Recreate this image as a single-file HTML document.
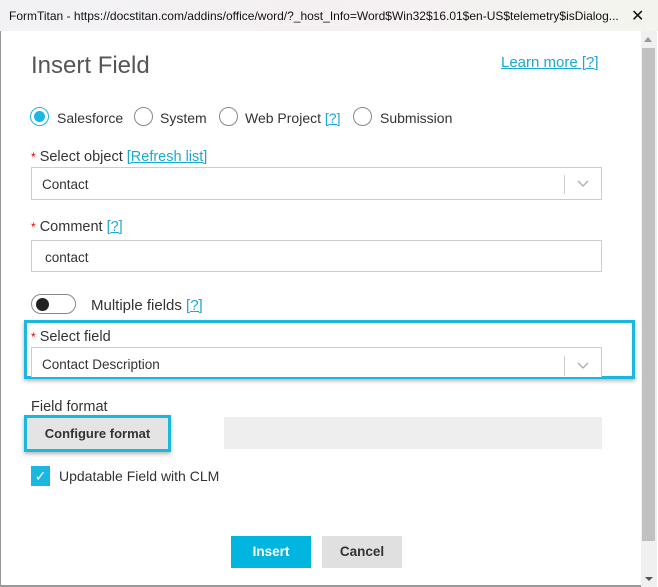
<!DOCTYPE html>
<html><head><style>
*{box-sizing:border-box;margin:0;padding:0}
body{width:658px;height:587px;overflow:hidden;background:#fff;font-family:"Liberation Sans",sans-serif;color:#333;position:relative;font-size:14px}
.a{position:absolute}
.tb{left:0;top:0;width:658px;height:31px;background:linear-gradient(90deg,#f2f2f4,#f5f0f2 60%,#f3f4ee);font-size:12px;color:#111;padding:9px 0 0 9px;white-space:nowrap}
.lbl{font-size:14.5px;color:#333}
.req{color:#d00;font-size:12px}
.lnk{color:#1ba8d0;text-decoration:underline}
.inp{border:1px solid #ccc;background:#fff;font-size:13.5px;padding-left:10px}
.radio{width:19px;height:19px;border:1px solid #888;border-radius:50%}
</style></head><body>
<div class="a tb">FormTitan - https://docstitan.com/addins/office/word/?_host_Info=Word$Win32$16.01$en-US$telemetry$isDialog...<span style="position:absolute;left:631px;top:6px;font-size:16px">✕</span></div>
<div class="a" style="left:0;top:31px;width:1px;height:556px;background:#999"></div>
<div class="a" style="left:641px;top:31px;width:16px;height:556px;background:#f0f0f0"></div>
<div class="a" style="left:642px;top:48px;width:13px;height:493px;background:#c1c1c1"></div>
<div class="a" style="left:644px;top:37px;width:0;height:0;border:4px solid transparent;border-bottom:5px solid #999;border-top:0"></div>
<div class="a" style="left:645px;top:577px;width:0;height:0;border:4px solid transparent;border-top:4px solid #555;border-bottom:0"></div>
<div class="a" style="left:0;top:585px;width:641px;height:2px;background:#999"></div>

<div class="a" style="left:31px;top:52px;font-size:24px;color:#555;font-weight:300">Insert Field</div>
<div class="a lnk" style="left:501px;top:54px;font-size:15px">Learn more [?]</div>

<div class="a radio" style="left:30px;top:107px;border-color:#1ab7e0"><div style="width:11px;height:11px;background:#1ab7e0;border-radius:50%;margin:3px"></div></div>
<div class="a lbl" style="left:57px;top:110px;font-size:14px">Salesforce</div>
<div class="a radio" style="left:134px;top:107px"></div>
<div class="a lbl" style="left:160px;top:110px;font-size:14px">System</div>
<div class="a radio" style="left:219px;top:107px"></div>
<div class="a lbl" style="left:245px;top:110px;font-size:14px">Web Project <span class="lnk" style="text-decoration:underline">[?]</span></div>
<div class="a radio" style="left:353px;top:107px"></div>
<div class="a lbl" style="left:380px;top:110px;font-size:14px">Submission</div>

<div class="a lbl" style="left:31px;top:149px"><span class="req">*</span> Select object <span class="lnk">[Refresh list]</span></div>
<div class="a inp" style="left:31px;top:167px;width:571px;height:33px;padding-top:9px">Contact<div class="a" style="left:532px;top:7px;width:1px;height:19px;background:#ccc"></div><svg class="a" style="left:545px;top:12px" width="12" height="8"><path d="M1 1l5 5 5-5" fill="none" stroke="#aaa" stroke-width="1.3"/></svg></div>

<div class="a lbl" style="left:31px;top:219px"><span class="req">*</span> Comment <span class="lnk">[?]</span></div>
<div class="a inp" style="left:31px;top:240px;width:571px;height:32px;padding-left:13px;padding-top:9px">contact</div>

<div class="a" style="left:31px;top:294px;width:45px;height:20px;border:1px solid #888;border-radius:10px"><div style="width:13px;height:13px;background:#222;border-radius:50%;margin:3px 0 0 4px"></div></div>
<div class="a lbl" style="left:91px;top:297px;font-size:15px">Multiple fields <span class="lnk">[?]</span></div>

<div class="a" style="left:24px;top:320px;width:611px;height:59px;border:3px solid #1ab7e0;box-shadow:0 2px 4px rgba(0,0,0,.3)"></div>
<div class="a lbl" style="left:31px;top:329px"><span class="req">*</span> Select field</div>
<div class="a inp" style="left:31px;top:347px;width:571px;height:30px;padding-top:9px;border-bottom:none">Contact Description<div class="a" style="left:532px;top:8px;width:1px;height:20px;background:#ccc"></div><svg class="a" style="left:545px;top:14px" width="12" height="8"><path d="M1 1l5 5 5-5" fill="none" stroke="#aaa" stroke-width="1.3"/></svg></div>

<div class="a lbl" style="left:31px;top:399px">Field format</div>
<div class="a" style="left:24px;top:415px;width:147px;height:37px;border:3px solid #1ab7e0;background:#e4e4e4;box-shadow:0 2px 4px rgba(0,0,0,.3);font-size:13px;font-weight:bold;color:#333;text-align:center;line-height:31px">Configure format</div>
<div class="a" style="left:224px;top:417px;width:378px;height:32px;background:#eee"></div>

<div class="a" style="left:31px;top:466px;width:19px;height:20px;background:#1ab7e0;color:#fff;font-size:14px;text-align:center;line-height:20px">✓</div>
<div class="a lbl" style="left:59px;top:468px;font-size:14px">Updatable Field with CLM</div>

<div class="a" style="left:231px;top:536px;width:80px;height:32px;background:#00b6e0;color:#fff;font-weight:bold;font-size:13.5px;text-align:center;line-height:32px">Insert</div>
<div class="a" style="left:322px;top:536px;width:80px;height:32px;background:#e0e0e0;color:#333;font-weight:bold;font-size:13.5px;text-align:center;line-height:32px">Cancel</div>
</body></html>
